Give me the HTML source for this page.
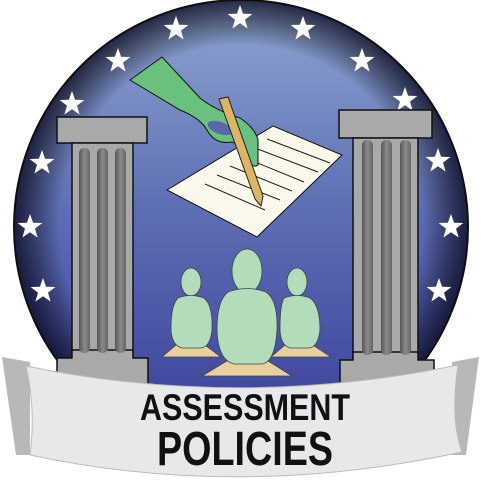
<!DOCTYPE html>
<html><head><style>
html,body{margin:0;padding:0;background:#fff;width:481px;height:485px;overflow:hidden}
svg{display:block}
text{font-family:"Liberation Sans Narrow","Liberation Sans",sans-serif;font-weight:bold}
</style></head><body>
<svg width="481" height="485" viewBox="0 0 481 485" xmlns="http://www.w3.org/2000/svg">
<defs>
<linearGradient id="bg" x1="0" y1="0" x2="0" y2="1">
<stop offset="0" stop-color="#8fa6d0"/><stop offset="0.45" stop-color="#5f6fb5"/><stop offset="1" stop-color="#363c98"/>
</linearGradient>
<radialGradient id="vig" cx="0.5" cy="0.5" r="0.5">
<stop offset="0.8" stop-color="#000" stop-opacity="0"/><stop offset="1" stop-color="#0a0a20" stop-opacity="0.8"/>
</radialGradient>
<linearGradient id="flute" x1="0" y1="0" x2="1" y2="0">
<stop offset="0" stop-color="#555"/><stop offset="0.5" stop-color="#8a8a8a"/><stop offset="1" stop-color="#666"/>
</linearGradient>
<polygon id="st" points="0,-13 3.1,-4.2 12.4,-4 5,1.6 7.6,10.5 0,5.2 -7.6,10.5 -5,1.6 -12.4,-4 -3.1,-4.2"/>
</defs>
<circle cx="241" cy="227" r="227" fill="url(#bg)" stroke="#111" stroke-width="2"/>
<circle cx="241" cy="227" r="227" fill="url(#vig)"/>
<g fill="#fff">
<use href="#st" x="240" y="18"/><use href="#st" x="176" y="29"/><use href="#st" x="303" y="29"/>
<use href="#st" x="118" y="61"/><use href="#st" x="362" y="61"/><use href="#st" x="72" y="104"/>
<use href="#st" x="405" y="100"/><use href="#st" x="42" y="163"/><use href="#st" x="438" y="161"/>
<use href="#st" x="30" y="227"/><use href="#st" x="451" y="227"/><use href="#st" x="43" y="291"/>
<use href="#st" x="439" y="291"/>
</g>
<polygon points="167,190 273,126 342,155 257,237" fill="#f9f8ea" stroke="#111" stroke-width="1"/>
<g stroke="#222" stroke-width="1">
<line x1="205" y1="184" x2="265" y2="210"/><line x1="217" y1="175" x2="280" y2="200"/>
<line x1="230" y1="166" x2="292" y2="191"/><line x1="243" y1="157" x2="304" y2="182"/>
<line x1="255" y1="148" x2="318" y2="172"/><line x1="267" y1="139" x2="330" y2="163"/>
</g>
<path d="M130,80 L162,57 L200,98 Q215,110 240,118 Q255,128 258,140 L258,165 Q254,168 250,163 L246,148 L232,142 Q215,145 207,130 Q200,118 180,110 Z" fill="#6ac17e" stroke="#111" stroke-width="1"/>
<ellipse cx="220" cy="128" rx="13" ry="6" transform="rotate(20 220 128)" fill="#5868ad"/>
<polygon points="219,99 228,97 263,196 261,206 255,199" fill="#dcb565" stroke="#222" stroke-width="1"/>
<g stroke="#111" stroke-width="1.5">
<rect x="57" y="117" width="90" height="26" fill="#a9a9a9"/>
<rect x="72" y="143" width="61" height="215" fill="#a9a9a9"/>
<path d="M57,358 L57,395 L148,395 L148,358 L133,358 L133,350 L72,350 L72,358 Z" fill="#a9a9a9"/>
<rect x="339" y="110" width="93" height="28" fill="#a9a9a9"/>
<rect x="353" y="138" width="65" height="222" fill="#a9a9a9"/>
<path d="M340,360 L340,395 L434,395 L434,360 L418,360 L418,352 L353,352 L353,360 Z" fill="#a9a9a9"/>
</g>
<g fill="url(#flute)">
<rect x="79" y="148" width="11" height="205" rx="5"/><rect x="97" y="148" width="11" height="205" rx="5"/><rect x="115" y="148" width="11" height="205" rx="5"/>
<rect x="362" y="140" width="11" height="215" rx="5"/><rect x="381" y="140" width="11" height="215" rx="5"/><rect x="400" y="140" width="11" height="215" rx="5"/>
</g>
<g stroke="#444" stroke-width="0.8">
<polygon points="176,345 205,345 221,357 162,357" fill="#e8cf9e"/>
<polygon points="285,345 313,345 331,357 271,357" fill="#e8cf9e"/>
<polygon points="230,359 265,359 292,376 202,376" fill="#e8cf9e"/>
<g fill="#b3dcbb">
<ellipse cx="191" cy="282" rx="10" ry="14"/>
<path d="M178,298 Q190,293 204,298 Q213,305 212,330 Q210,348 200,348 L182,348 Q171,345 171,328 Q171,305 178,298Z"/>
<ellipse cx="297" cy="282" rx="10" ry="14"/>
<path d="M284,298 Q297,293 310,298 Q320,305 320,330 Q318,348 308,348 L290,348 Q280,345 280,328 Q280,305 284,298Z"/>
<ellipse cx="247" cy="271" rx="15" ry="22"/>
<path d="M228,292 Q247,285 266,292 Q278,300 277,330 Q275,362 262,364 L234,364 Q218,360 217,330 Q217,300 228,292Z"/>
</g>
</g>
<path d="M2,357 L30,362 L30,455 L16,455 Z" fill="#b8b8b8"/>
<path d="M479,357 L452,362 L452,455 L466,455 Z" fill="#b8b8b8"/>
<path d="M26,366 Q240,410 458,365 Q450,420 462,452 Q240,500 30,455 Q36,410 26,366 Z" fill="#e7e8ea" stroke="#bbb" stroke-width="1"/>
<text x="140" y="420" font-size="37" textLength="210" lengthAdjust="spacingAndGlyphs" fill="#111">ASSESSMENT</text>
<text x="157" y="465" font-size="48" textLength="176" lengthAdjust="spacingAndGlyphs" fill="#111">POLICIES</text>
</svg>
</body></html>
